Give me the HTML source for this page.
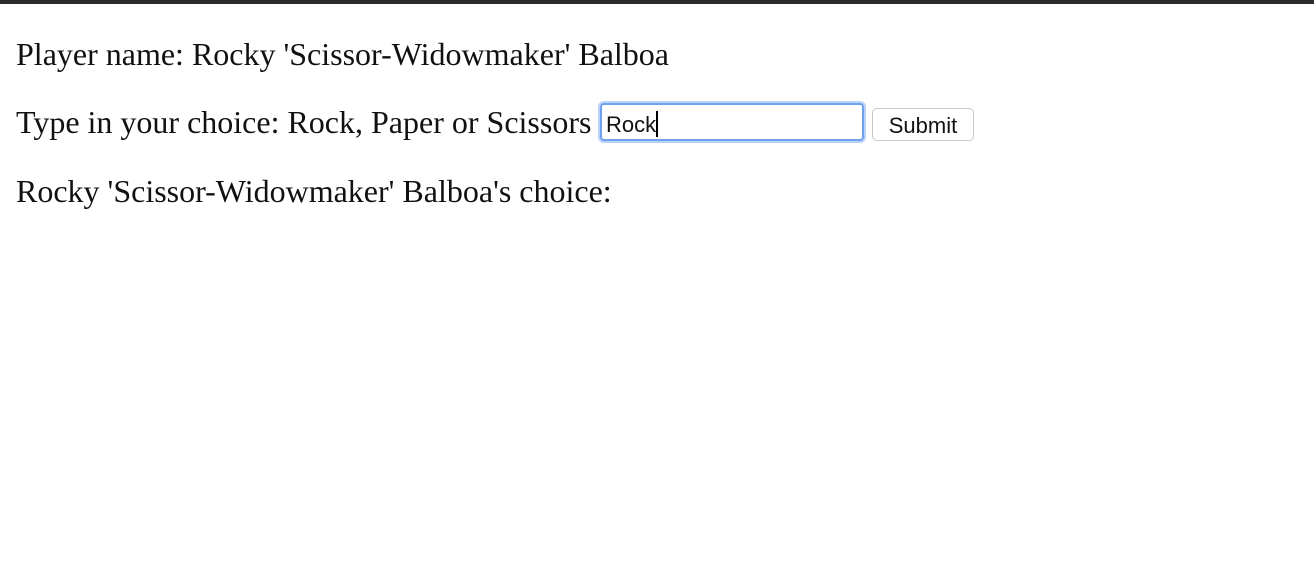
<!DOCTYPE html>
<html><head><style>
body{margin:0;background:#fff;font-family:"Liberation Serif",serif;font-size:32px;color:#111}
.bar{height:4px;background:#2b2b2b}
p{position:absolute;left:16px;margin:0;white-space:nowrap;line-height:32px}
.inp{position:absolute;left:600px;top:103px;width:256px;height:34px;border:2px solid #6ea1f0;border-radius:4px;box-shadow:0 0 0 2px #b9d2f7;font-family:"Liberation Sans",sans-serif;font-size:22px;line-height:40px;padding-left:4px;box-sizing:content-box}
.cur{display:inline-block;width:2px;height:26px;background:#000;vertical-align:-5px}
.btn{position:absolute;left:872px;top:108px;width:100px;height:31px;border:1px solid #c8c8c8;border-radius:5px;background:#fff;font-family:"Liberation Sans",sans-serif;font-size:22px;line-height:33px;text-align:center}
</style></head><body>
<div class="bar"></div>
<p style="top:38px">Player name: Rocky 'Scissor-Widowmaker' Balboa</p>
<p style="top:106px">Type in your choice: Rock, Paper or Scissors</p>
<div class="inp">Rock<span class="cur"></span></div>
<div class="btn">Submit</div>
<p style="top:175px">Rocky 'Scissor-Widowmaker' Balboa's choice:</p>
</body></html>
